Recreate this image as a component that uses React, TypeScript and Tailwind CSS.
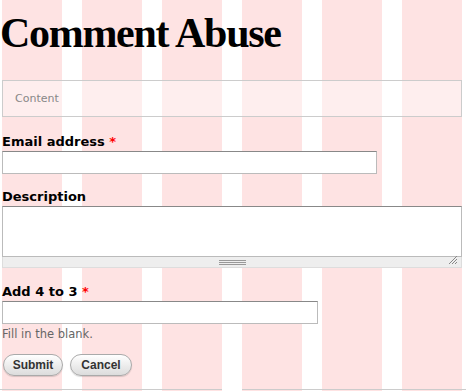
const sans = "font-['DejaVu_Sans',Verdana,sans-serif]";

const Label = ({ text, required, className = '' }: { text: string; required?: boolean; className?: string }) => (
  <label className={`block h-4 text-[13px] leading-4 font-bold text-black ${sans} ${className}`}>
    {text}
    {required && <span className="text-[#f00]"> *</span>}
  </label>
);

export default function App() {
  return (
    <div className="relative h-[391px] w-[466px] overflow-hidden bg-white bg-[linear-gradient(to_right,#fee3e3_60px,transparent_60px)] bg-[length:80px_100%] bg-[position:2px_0]">
      <div className="pl-[2px] pr-[4px]">
        <h1 className="mt-[12px] h-[42px] text-[42px] leading-[42px] font-bold tracking-[-1.3px] text-black font-['Liberation_Serif',Georgia,serif] -ml-[2px]">
          Comment Abuse
        </h1>

        <div className={`mt-[26px] flex h-[37px] items-center border border-[#ccc] bg-white/40 pl-[12px] text-[11px] leading-4 text-[#888] ${sans}`}>
          Content
        </div>

        <Label text="Email address" required className="mt-[17px]" />
        <input
          type="text"
          className="mt-px block h-[23px] w-[375px] border border-[#bbb] border-t-[#888] bg-white outline-none"
        />

        <Label text="Description" className="mt-[15px]" />
        <div className="relative mt-px w-[460px]">
          <textarea className="block h-[51px] w-full resize-none border border-[#bbb] border-t-[#888] bg-white outline-none" />
          <svg className="absolute right-[4px] bottom-[3px]" width="11" height="11" viewBox="0 0 11 11">
            <path d="M10 2 L2 10 M10 5 L5 10 M10 8 L8 10" stroke="#888" strokeWidth="1" />
          </svg>
          <div className="flex h-[11px] items-center justify-center border border-t-0 border-[#ddd] bg-[#eee]">
            <div className="flex w-[27px] flex-col gap-px">
              <div className="h-px bg-[#999]" />
              <div className="h-px bg-[#999]" />
              <div className="h-px bg-[#999]" />
            </div>
          </div>
        </div>

        <Label text="Add 4 to 3" required className="mt-[16px]" />
        <input
          type="text"
          className="mt-px block h-[23px] w-[316px] border border-[#bbb] border-t-[#888] bg-white outline-none"
        />
        <p className={`mt-[3px] text-[11.5px] leading-[14px] text-[#666] ${sans}`}>Fill in the blank.</p>

        <div className="mt-[13px] ml-px flex gap-[7px] font-['Liberation_Sans',Arial,sans-serif]">
          <button
            type="button"
            className="h-[22px] w-[60px] rounded-full border border-[#aaa] bg-gradient-to-b from-white to-[#dcdcdc] text-[12px] font-bold text-[#333] shadow-[0_1px_1px_rgba(0,0,0,0.15)]"
          >
            Submit
          </button>
          <button
            type="button"
            className="h-[22px] w-[62px] rounded-full border border-[#aaa] bg-gradient-to-b from-white to-[#dcdcdc] text-[12px] font-bold text-[#333] shadow-[0_1px_1px_rgba(0,0,0,0.15)]"
          >
            Cancel
          </button>
        </div>
      </div>

      <div className="mt-[13px] flex">
        <div className="w-[222px] border-t border-[#ccc]" />
        <div className="ml-[20px] flex-1 border-t border-[#ccc]" />
      </div>
    </div>
  );
}
